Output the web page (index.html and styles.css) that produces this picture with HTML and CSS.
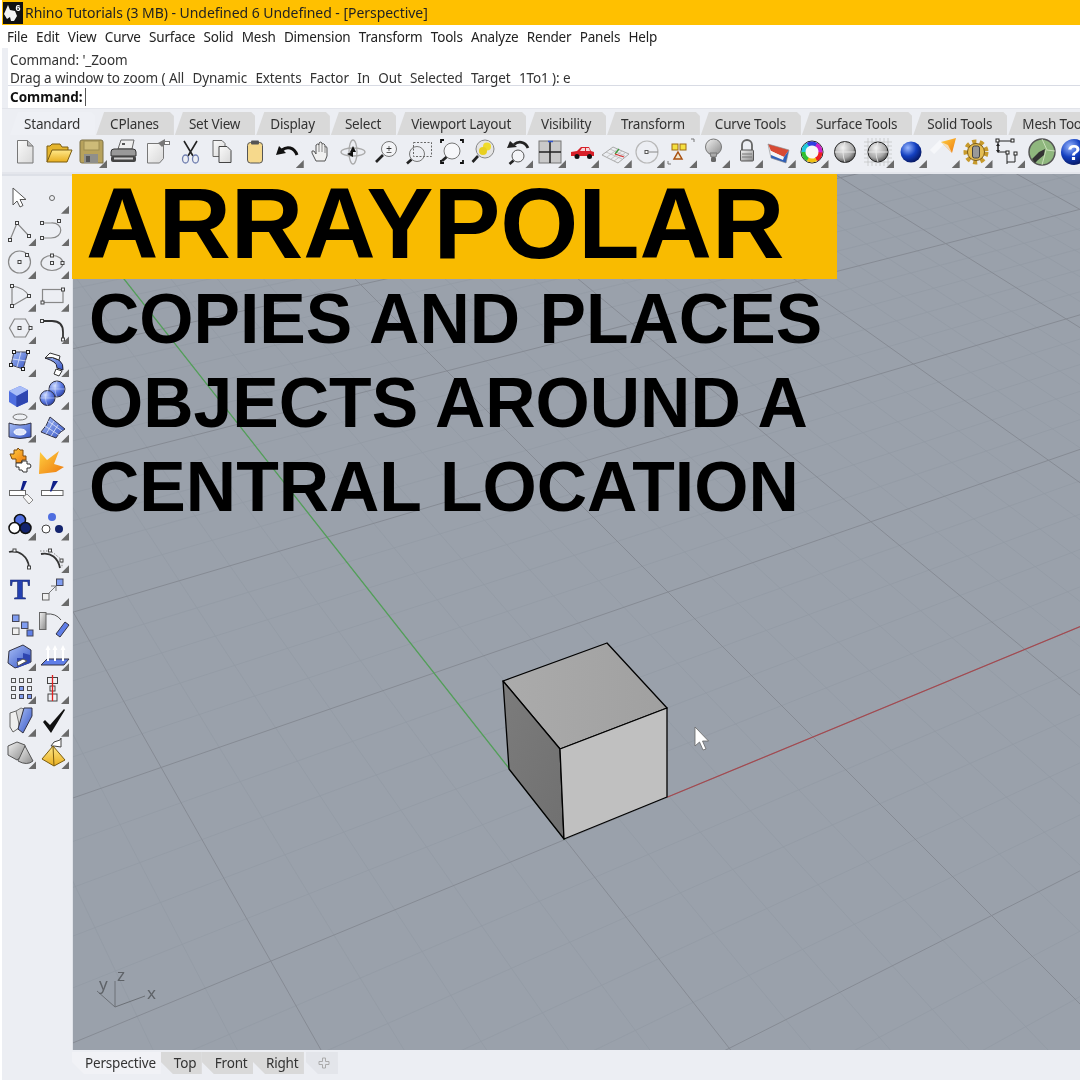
FILE: index.html
```html
<!DOCTYPE html>
<html lang="en">
<head>
<meta charset="utf-8">
<title>Rhino Tutorials</title>
<link rel="stylesheet" href="styles.css">
</head>
<body>
<svg class="defs" width="0" height="0" aria-hidden="true">
<defs>
<linearGradient id="gPage" x1="0" y1="0" x2="1" y2="1"><stop offset="0" stop-color="#fafafa"/><stop offset="1" stop-color="#d8d8d8"/></linearGradient>
<linearGradient id="gY" x1="0" y1="0" x2="0" y2="1"><stop offset="0" stop-color="#ffe88a"/><stop offset="1" stop-color="#e8ae1e"/></linearGradient>
<linearGradient id="gB" x1="0" y1="0" x2="1" y2="1"><stop offset="0" stop-color="#a9c0f7"/><stop offset="1" stop-color="#3553c4"/></linearGradient>
<linearGradient id="gO" x1="0" y1="0" x2="1" y2="1"><stop offset="0" stop-color="#ffd040"/><stop offset="1" stop-color="#ee7a10"/></linearGradient>
<linearGradient id="gGr" x1="0" y1="0" x2="1" y2="1"><stop offset="0" stop-color="#f2f2f2"/><stop offset="1" stop-color="#8a8a8a"/></linearGradient>
<linearGradient id="gTop" x1="0" y1="0" x2="1" y2="0"><stop offset="0" stop-color="#ababab"/><stop offset="1" stop-color="#a0a0a0"/></linearGradient>
<linearGradient id="gLeft" x1="0" y1="0" x2="1" y2="1"><stop offset="0" stop-color="#7c7c7c"/><stop offset="1" stop-color="#707070"/></linearGradient>
<radialGradient id="rB" cx=".35" cy=".3" r=".8"><stop offset="0" stop-color="#cfdcff"/><stop offset=".55" stop-color="#5a78e0"/><stop offset="1" stop-color="#27399a"/></radialGradient>
<radialGradient id="rD" cx=".35" cy=".3" r=".8"><stop offset="0" stop-color="#9ab8ff"/><stop offset=".5" stop-color="#1440c0"/><stop offset="1" stop-color="#041050"/></radialGradient>
<radialGradient id="rG" cx=".4" cy=".3" r=".8"><stop offset="0" stop-color="#f4f4f4"/><stop offset=".6" stop-color="#a8a8a8"/><stop offset="1" stop-color="#333"/></radialGradient>
</defs>
</svg>
<div class="app">
<header class="titlebar">
<svg class="logo" viewBox="0 0 20 22"><rect width="20" height="22" fill="#111"/><path d="M1 12l4-9 2 5 5 1 2 5-3 5H8l-1-4-3 2z" fill="#f2f2f2"/><text x="12.500" y="9" class="logo-six">6</text></svg>
<span>Rhino Tutorials (3 MB) - Undefined 6 Undefined - [Perspective]</span>
</header>
<nav class="menubar"><span>File</span><span>Edit</span><span>View</span><span>Curve</span><span>Surface</span><span>Solid</span><span>Mesh</span><span>Dimension</span><span>Transform</span><span>Tools</span><span>Analyze</span><span>Render</span><span>Panels</span><span>Help</span></nav>
<section class="cmd">
<div class="cmd-hist"><p>Command: '_Zoom</p><p>Drag a window to zoom ( <span class="opts">All&nbsp; Dynamic&nbsp; Extents&nbsp; Factor&nbsp; In&nbsp; Out&nbsp; Selected&nbsp; Target&nbsp; 1To1</span> ): e</p></div>
<div class="cmd-line"><b>Command:</b><i class="caret"></i></div>
</section>
<div class="tabs"><span class="tab on">Standard</span><span class="tab">CPlanes</span><span class="tab">Set View</span><span class="tab">Display</span><span class="tab">Select</span><span class="tab">Viewport Layout</span><span class="tab">Visibility</span><span class="tab">Transform</span><span class="tab">Curve Tools</span><span class="tab">Surface Tools</span><span class="tab">Solid Tools</span><span class="tab">Mesh Tools</span></div>
<div class="toolbar">
<span class="tool"><svg class="ic" viewBox="0 0 32 32"><path d="M8.5 4.5h10l5.500 5.500v17h-15.500z" fill="url(#gPage)" stroke="#777"/><path d="M18.500 4.500v5.500h5.500" fill="#bbb" stroke="#777"/></svg></span>
<span class="tool"><svg class="ic" viewBox="0 0 32 32"><path d="M5 26V10h3l2-2h8l2 3h6v3" fill="#e5b52e" stroke="#7a5c10"/><path d="M5 26l5-12h20l-5 12z" fill="url(#gY)" stroke="#7a5c10"/></svg></span>
<span class="tool more"><svg class="ic" viewBox="0 0 32 32"><path d="M5 6q0-2 2-2h19q2 0 2 2v21H7q-2 0-2-2z" fill="#b7a25c" stroke="#7c7046"/><rect x="9" y="5" width="15" height="9" fill="#cdbb78" stroke="#9c8c52"/><rect x="9" y="18" width="14" height="9" fill="#8f8f8a"/><rect x="11" y="20" width="4" height="6" fill="#555"/></svg></span>
<span class="tool"><svg class="ic" viewBox="0 0 32 32"><path d="M11 13l3-9h13l-2 9z" fill="#eee" stroke="#666"/><rect x="15" y="7" width="3" height="2" fill="#555"/><path d="M4 16q0-3 3-3h19q3 0 3 3v4H4z" fill="#999" stroke="#333"/><rect x="4" y="20" width="25" height="6" rx="2" fill="#444"/><rect x="7" y="21.500" width="19" height="2" fill="#ccc"/></svg></span>
<span class="tool"><svg class="ic" viewBox="0 0 32 32"><path d="M7.500 7.500h16v15l-4 4.500h-12z" fill="url(#gPage)" stroke="#777"/><path d="M18 7l7-4v2h5v4h-6l-2 2z" fill="#777"/><path d="M25 6h4v2h-4z" fill="#fff"/></svg></span>
<span class="tool"><svg class="ic" viewBox="0 0 32 32"><path d="M11 5l9 15M24 5l-9 15" stroke="#222" stroke-width="1.600" fill="none"/><ellipse cx="12.500" cy="23" rx="3" ry="4" fill="none" stroke="#7280b0" stroke-width="1.300"/><ellipse cx="22.500" cy="23" rx="3" ry="4" fill="none" stroke="#7280b0" stroke-width="1.300"/></svg></span>
<span class="tool"><svg class="ic" viewBox="0 0 32 32"><path d="M7 4.500h9l3 3v13H7z" fill="url(#gPage)" stroke="#666"/><path d="M13 10.500h8l4 4v12H13z" fill="url(#gPage)" stroke="#444"/></svg></span>
<span class="tool"><svg class="ic" viewBox="0 0 32 32"><rect x="8.500" y="6.500" width="15" height="20.500" rx="3" fill="#f6d98c" stroke="#555"/><rect x="12" y="4.500" width="8" height="4" rx="1" fill="#555"/></svg></span>
<span class="tool more"><svg class="ic" viewBox="0 0 32 32"><path d="M26 19C23 11 16 10 11 14" stroke="#111" stroke-width="3" fill="none"/><path d="M5 19l3-9 7 7z" fill="#111"/></svg></span>
<span class="tool"><svg class="ic" viewBox="0 0 32 32"><path d="M12 25l-4-8q-1-3 2-2l2 3V9q2-2 3 0V7q2-2 3 0v1q2-1 3 1v2q2-1 2 1v8l-2 5z" fill="#f0f0f0" stroke="#555"/><path d="M15 9v7M18 8v8M21 10v7" stroke="#888" fill="none"/></svg></span>
<span class="tool"><svg class="ic" viewBox="0 0 32 32"><ellipse cx="16" cy="16" rx="12" ry="4" fill="none" stroke="#aaa" stroke-width="1.300"/><ellipse cx="16" cy="16" rx="4" ry="12" fill="none" stroke="#aaa" stroke-width="1.300"/><path d="M16 10l3 6h-6z" fill="#111"/><path d="M10 18l6-3v6z" fill="#111"/></svg></span>
<span class="tool"><svg class="ic" viewBox="0 0 32 32"><circle cx="19" cy="13" r="7.500" fill="#f3f4f7" stroke="#777"/><path d="M13 19l-7 7" stroke="#222" stroke-width="2.600"/><text x="19" y="17" class="ic-txt">±</text></svg></span>
<span class="tool"><svg class="ic" viewBox="0 0 32 32"><rect x="10.500" y="6.500" width="18" height="14" fill="none" stroke="#666" stroke-dasharray="2 1.500"/><circle cx="14" cy="18" r="7.500" fill="none" stroke="#777"/><path d="M8.500 23.500l-4.500 4" stroke="#222" stroke-width="2.600"/></svg></span>
<span class="tool"><svg class="ic" viewBox="0 0 32 32"><circle cx="17" cy="15" r="8" fill="#f6f7fa" stroke="#777"/><path d="M11.500 21l-4.500 4" stroke="#222" stroke-width="2.600"/><path d="M6 7V4h3M25 4h3v3M28 24v3h-3M9 27H6v-3" stroke="#111" stroke-width="1.800" fill="none"/></svg></span>
<span class="tool"><svg class="ic" viewBox="0 0 32 32"><circle cx="17" cy="13" r="9" fill="#e4e4e4" stroke="#888"/><circle cx="19" cy="10.500" r="4" fill="#f0dc2c"/><circle cx="15" cy="15" r="4" fill="#e8cf20"/><path d="M10 20l-5.500 6" stroke="#222" stroke-width="2.600"/></svg></span>
<span class="tool more"><svg class="ic" viewBox="0 0 32 32"><circle cx="17" cy="20" r="6" fill="#f3f4f7" stroke="#555"/><path d="M12.500 24.500l-4 3.500" stroke="#222" stroke-width="2.600"/><path d="M27 12C24 5 17 5 13 8.500" stroke="#222" stroke-width="2.800" fill="none"/><path d="M6 12l3-7 7 6z" fill="#222"/></svg></span>
<span class="tool more"><svg class="ic" viewBox="0 0 32 32"><rect x="5" y="5" width="22" height="22" fill="#c9c9c9" stroke="#777"/><path d="M16 5v22M5 16h22" stroke="#222" stroke-width="1.500"/><path d="M14 5.500h5" stroke="#3355cc" stroke-width="1.500"/></svg></span>
<span class="tool more"><svg class="ic" viewBox="0 0 32 32"><path d="M4 20v-4l6-1 4-4h8l2 4 3 1v4z" fill="#d8202a"/><path d="M15 12h3v3h-5zM19 12h3l1 3h-4z" fill="#f4d8d8"/><circle cx="10" cy="20.500" r="2.500" fill="#111"/><circle cx="22.500" cy="20.500" r="2.500" fill="#111"/></svg></span>
<span class="tool more"><svg class="ic" viewBox="0 0 32 32"><path d="M3 19l11-8 16 7-11 9z" fill="#eceef2" stroke="#aaa"/><path d="M7 16l16 7M11 13l15 7M8 21l11-8M12 23l11-8M15 25l11-8" stroke="#b5b5b5" stroke-width=".7"/><path d="M16 18l4-5" stroke="#3a9a3a" stroke-width="1.300"/><path d="M16 18l9 3" stroke="#d83030" stroke-width="1.300"/></svg></span>
<span class="tool more"><svg class="ic" viewBox="0 0 32 32"><circle cx="15" cy="16" r="11" fill="none" stroke="#b8b8b8" stroke-width="1.200"/><rect x="13" y="14.500" width="3" height="3" fill="#fff" stroke="#555"/><path d="M16 16h10" stroke="#888"/></svg></span>
<span class="tool more"><svg class="ic" viewBox="0 0 32 32"><path d="M26 3h3v3M3 25v3h3" stroke="#777" fill="none"/><rect x="7" y="8" width="6" height="6" fill="#f4e040" stroke="#a06a10"/><rect x="15" y="8" width="6" height="6" fill="#f4e040" stroke="#a06a10"/><path d="M13 16l4 7H9z" fill="#f0e8d0" stroke="#a85010" stroke-width="1.500"/></svg></span>
<span class="tool more"><svg class="ic" viewBox="0 0 32 32"><circle cx="15.500" cy="11" r="8" fill="url(#gGr)" stroke="#777"/><path d="M12 17l1 4h5l1-4z" fill="#aaa" stroke="#777"/><rect x="13" y="21" width="5" height="5" rx="1.500" fill="#666"/></svg></span>
<span class="tool more"><svg class="ic" viewBox="0 0 32 32"><path d="M11 14V9a5 5 0 0 1 10 0v5" fill="none" stroke="#666" stroke-width="1.800"/><rect x="9.500" y="14" width="13" height="11" rx="1" fill="url(#gGr)" stroke="#555"/><path d="M11 18h10M11 21h10" stroke="#777"/></svg></span>
<span class="tool more"><svg class="ic" viewBox="0 0 32 32"><path d="M5 8l21 6-5 7L8 15z" fill="#d84a34"/><path d="M8 15l13 6-1 3-12-5z" fill="#f5f5f5"/><path d="M8 19l12 5 1-3 5-7-3 13-15-5z" fill="#3060b8"/><path d="M5 8l21 6-3 13-15-5z" fill="none" stroke="#888" stroke-width=".6"/></svg></span>
<span class="tool more"><svg class="ic" viewBox="0 0 32 32"><circle cx="16" cy="16" r="11" fill="#f8f8f8" stroke="#222"/><g fill="none" stroke-width="4"><circle cx="16" cy="16" r="8.500" stroke="#ee2020" pathLength="6" stroke-dasharray="1.050 4.950"/><circle cx="16" cy="16" r="8.500" stroke="#f0c010" pathLength="6" stroke-dasharray="1.050 4.950" stroke-dashoffset="-1"/><circle cx="16" cy="16" r="8.500" stroke="#30c030" pathLength="6" stroke-dasharray="1.050 4.950" stroke-dashoffset="-2"/><circle cx="16" cy="16" r="8.500" stroke="#20c8d8" pathLength="6" stroke-dasharray="1.050 4.950" stroke-dashoffset="-3"/><circle cx="16" cy="16" r="8.500" stroke="#3040e0" pathLength="6" stroke-dasharray="1.050 4.950" stroke-dashoffset="-4"/><circle cx="16" cy="16" r="8.500" stroke="#d020c8" pathLength="6" stroke-dasharray="1.050 4.950" stroke-dashoffset="-5"/></g></svg></span>
<span class="tool"><svg class="ic" viewBox="0 0 32 32"><circle cx="16" cy="16" r="10.500" fill="url(#rG)" stroke="#222"/><path d="M5.500 16h21M16 5.500q-4 10 0 21" stroke="#eee" stroke-width=".8" fill="none"/></svg></span>
<span class="tool more"><svg class="ic" viewBox="0 0 32 32"><g stroke="#bbb" stroke-width=".6"><path d="M2 6h28M2 10h28M2 14h28M2 18h28M2 22h28M2 26h28M6 2v28M10 2v28M14 2v28M18 2v28M22 2v28M26 2v28"/></g><circle cx="16" cy="16" r="10" fill="url(#rG)" stroke="#222"/><path d="M6 16h20M16 6q-4 10 0 20" stroke="#eee" stroke-width=".8" fill="none"/></svg></span>
<span class="tool more"><svg class="ic" viewBox="0 0 32 32"><circle cx="16" cy="16" r="10.500" fill="url(#rD)"/></svg></span>
<span class="tool more"><svg class="ic" viewBox="0 0 32 32"><path d="M5 16l10-10" stroke="#f6f7fa" stroke-width="6"/><path d="M14 6L29 2l-4 15z" fill="url(#gO)"/><path d="M14 6l11 11-4-8z" fill="#f4f4f4" opacity=".7"/></svg></span>
<span class="tool more"><svg class="ic" viewBox="0 0 32 32"><circle cx="16" cy="16" r="10" fill="none" stroke="#c79a2c" stroke-width="5" stroke-dasharray="4 3.200"/><circle cx="16" cy="16" r="8.500" fill="#e4bd52" stroke="#7a5a18"/><rect x="12.500" y="10" width="7" height="12" rx="2" fill="#999" stroke="#444"/></svg></span>
<span class="tool more"><svg class="ic" viewBox="0 0 32 32"><path d="M5 5h14M5 5v11h9v12M5 10v4M22 17v9M14 26h8" stroke="#222" fill="none"/><g fill="#fff" stroke="#222"><rect x="3" y="3" width="3" height="3"/><rect x="18" y="3" width="3" height="3"/><rect x="13" y="15" width="3" height="3"/><rect x="21" y="16" width="3" height="3"/></g><path d="M3 10h4l-2-3zM3 14h4l-2 3z" fill="#222"/></svg></span>
<span class="tool"><svg class="ic" viewBox="0 0 32 32"><circle cx="16" cy="16" r="13" fill="#8fb77e" stroke="#555" stroke-width="1.500"/><path d="M6 23l7-7 6-3-1 6-6 5-3 3z" fill="#333"/><path d="M16 3l5 11 8 1M20 14l-4 15" stroke="#d8e8c8" stroke-width=".8" fill="none"/></svg></span>
<span class="tool"><svg class="ic" viewBox="0 0 32 32"><circle cx="16" cy="16" r="13" fill="url(#rD)"/><text x="16" y="24" class="ic-help">?</text></svg></span>
</div>
<main class="work">
<aside class="side">
<span class="tool"><svg class="ic" viewBox="0 0 32 32"><path d="M9 7v17l4-4 3 6 3-1.500-3-6h6z" fill="#fff" stroke="#555"/></svg></span>
<span class="tool more"><svg class="ic" viewBox="0 0 32 32"><circle cx="15" cy="17" r="2.500" fill="#eef0f4" stroke="#666"/></svg></span>
<span class="tool more"><svg class="ic" viewBox="0 0 32 32"><path d="M6 26l7-17 12 13" class="ln"/><rect x="4.500" y="24.500" width="3" height="3" class="pt"/><rect x="11.500" y="7.500" width="3" height="3" class="pt"/><rect x="23.500" y="20.500" width="3" height="3" class="pt"/></svg></span>
<span class="tool more"><svg class="ic" viewBox="0 0 32 32"><path d="M5 9h9c13-1 13 15 0 15H5" class="ln"/><rect x="3.500" y="7.500" width="3" height="3" class="pt"/><rect x="20.500" y="5.500" width="3" height="3" class="pt"/><rect x="3.500" y="22.500" width="3" height="3" class="pt"/></svg></span>
<span class="tool more"><svg class="ic" viewBox="0 0 32 32"><circle cx="15.500" cy="16" r="11" class="ln"/><rect x="14" y="14.500" width="3" height="3" class="pt"/><rect x="21.500" y="7.500" width="3" height="3" class="pt"/></svg></span>
<span class="tool more"><svg class="ic" viewBox="0 0 32 32"><ellipse cx="15" cy="17" rx="11" ry="7.500" class="ln"/><rect x="13.500" y="15.500" width="3" height="3" class="pt"/><rect x="13.500" y="8" width="3" height="3" class="pt"/><rect x="24" y="15.500" width="3" height="3" class="pt"/></svg></span>
<span class="tool more"><svg class="ic" viewBox="0 0 32 32"><path d="M8 7C16 8 22 12 25 17L8 27z" class="ln"/><rect x="6.500" y="5.500" width="3" height="3" class="pt"/><rect x="23.500" y="15.500" width="3" height="3" class="pt"/><rect x="6.500" y="25.500" width="3" height="3" class="pt"/></svg></span>
<span class="tool more"><svg class="ic" viewBox="0 0 32 32"><rect x="5.500" y="10.500" width="20.500" height="13" class="ln"/><rect x="4" y="22" width="3" height="3" class="pt"/><rect x="24.500" y="9" width="3" height="3" class="pt"/></svg></span>
<span class="tool more"><svg class="ic" viewBox="0 0 32 32"><path d="M5.500 16l5-9h11l5 9-5 9h-11z" class="ln"/><rect x="14" y="14.500" width="3" height="3" class="pt"/><rect x="25" y="14.500" width="3" height="3" class="pt"/></svg></span>
<span class="tool more"><svg class="ic" viewBox="0 0 32 32"><path d="M5 9h10q11 0 11 11v8" fill="none" stroke="#333" stroke-width="1.800"/><rect x="3.500" y="7.500" width="3" height="3" class="pt"/><rect x="24.500" y="26" width="3" height="3" class="pt"/></svg></span>
<span class="tool more"><svg class="ic" viewBox="0 0 32 32"><path d="M10 8h14l-5 17-12-4z" fill="url(#gB)" stroke="#445"/><path d="M17 8l-4 15M8.500 15l14 2" stroke="#dfe6fa" stroke-width=".8"/><g fill="#fff" stroke="#222"><rect x="8.500" y="6.500" width="3" height="3"/><rect x="22.500" y="6.500" width="3" height="3"/><rect x="17.500" y="23.500" width="3" height="3"/><rect x="5.500" y="19.500" width="3" height="3"/></g></svg></span>
<span class="tool more"><svg class="ic" viewBox="0 0 32 32"><path d="M8 14q8-2 14 2 5 4 4 10l-6-2q0-4-3-6-3-2-9-4z" fill="url(#gB)" stroke="#223"/><path d="M8 14l5-5 10 3-1 4q-6-4-14-2z" fill="#fff" stroke="#333"/><path d="M19 25l6 2-3 5-5-2z" fill="#fff" stroke="#333"/></svg></span>
<span class="tool more"><svg class="ic" viewBox="0 0 32 32"><path d="M5 14l11-5 8 4v12l-11 5-8-5z" fill="#4f6ee0"/><path d="M5 14l8 5 11-6-8-4z" fill="#a9bdf8"/><path d="M13 19v11" stroke="#2a3f9a"/><path d="M13 19l11-6v12l-11 5z" fill="#2f46b0"/></svg></span>
<span class="tool more"><svg class="ic" viewBox="0 0 32 32"><circle cx="20" cy="12" r="8" fill="url(#rB)" stroke="#334"/><path d="M12 12h16M20 4q-4 8 0 16" stroke="#dfe6fa" stroke-width=".5" fill="none"/><circle cx="10.500" cy="21" r="7.500" fill="url(#rB)" stroke="#334"/><path d="M3 21h15M10.500 13.500q-4 7.500 0 15" stroke="#dfe6fa" stroke-width=".5" fill="none"/></svg></span>
<span class="tool more"><svg class="ic" viewBox="0 0 32 32"><ellipse cx="16" cy="7" rx="7" ry="3" fill="#eef0f4" stroke="#777"/><path d="M5 13q11 4 22 0v14q-11 3-22 0z" fill="url(#gB)" stroke="#334"/><ellipse cx="16" cy="22" rx="6" ry="3" fill="#dfe6fa" stroke="#fff"/></svg></span>
<span class="tool more"><svg class="ic" viewBox="0 0 32 32"><path d="M4 22q6-6 9-15l15 12q-6 3-9 9z" fill="url(#gB)" stroke="#334"/><path d="M8 16l14 9M11 11l14 10M9 24l8-13M14 26l7-11" stroke="#dfe6fa" stroke-width=".8"/></svg></span>
<span class="tool"><svg class="ic" viewBox="0 0 32 32"><path d="M6 11h4V7h3l1-2 2 2h3v6h3v4h-4l-1 3h-5v-4H8z" fill="url(#gO)" stroke="#7a4a10"/><path d="M15 20h3v-2h5v3h3l1 2-1 2h-3v4h-4l-1-2h-3v-3h-3v-4z" fill="#fff" stroke="#333"/></svg></span>
<span class="tool"><svg class="ic" viewBox="0 0 32 32"><path d="M2 31l1-22 7 8 12-9-5 13 10 3-8 5z" fill="url(#gO)"/></svg></span>
<span class="tool"><svg class="ic" viewBox="0 0 32 32"><path d="M17 20L23 6h-4l-3 11z" fill="#10208a"/><rect x="5.500" y="15.500" width="16" height="5" fill="#fff" stroke="#666"/><path d="M19 22l4-3 6 6-4 4z" fill="#f6f6f6" stroke="#888"/></svg></span>
<span class="tool"><svg class="ic" viewBox="0 0 32 32"><rect x="4.500" y="15.500" width="21.500" height="5" fill="#fff" stroke="#666"/><path d="M14 17l7-11h-5l-3 10z" fill="#10208a"/></svg></span>
<span class="tool more"><svg class="ic" viewBox="0 0 32 32"><circle cx="16" cy="12" r="5.500" fill="#4f6ee0" stroke="#111" stroke-width="1.500"/><circle cx="10.500" cy="20" r="5.500" fill="#fff" stroke="#111" stroke-width="1.500"/><circle cx="21.500" cy="20" r="5.500" fill="#14246e" stroke="#111" stroke-width="1.500"/></svg></span>
<span class="tool more"><svg class="ic" viewBox="0 0 32 32"><circle cx="15" cy="9" r="4" fill="#4f6ee0"/><circle cx="9" cy="21" r="4" fill="#fff" stroke="#444"/><circle cx="22" cy="21" r="4" fill="#14246e"/></svg></span>
<span class="tool"><svg class="ic" viewBox="0 0 32 32"><path d="M5 11C15 8 24 16 25 26" fill="none" stroke="#333" stroke-width="1.800"/><rect x="9" y="8" width="3" height="3" class="pt"/><rect x="23.500" y="25" width="3" height="3" class="pt"/></svg></span>
<span class="tool more"><svg class="ic" viewBox="0 0 32 32"><path d="M3 10h11l11 9v8" fill="none" stroke="#888" stroke-dasharray="1.500 1.500"/><path d="M4 13C14 11 21 17 23 27" fill="none" stroke="#333" stroke-width="1.800"/><rect x="11.500" y="8" width="3" height="3" class="pt"/><rect x="23" y="18" width="3" height="3" class="pt"/></svg></span>
<span class="tool"><svg class="ic" viewBox="0 0 32 32"><text x="16" y="26" class="ic-t">T</text></svg></span>
<span class="tool more"><svg class="ic" viewBox="0 0 32 32"><rect x="5.500" y="20.500" width="6.500" height="6.500" fill="#f0f0f0" stroke="#666"/><rect x="19.500" y="6" width="6.500" height="6.500" fill="#7f9cf0" stroke="#445"/><path d="M12 20l7-7M14 13h5v5" stroke="#777" fill="none"/></svg></span>
<span class="tool"><svg class="ic" viewBox="0 0 32 32"><rect x="8.500" y="9" width="6.500" height="6.500" fill="#7f9cf0" stroke="#445"/><rect x="17.500" y="16" width="6.500" height="6.500" fill="#7f9cf0" stroke="#445"/><rect x="8.500" y="22" width="6.500" height="6.500" fill="#f0f0f0" stroke="#666"/><rect x="23" y="24" width="6" height="6" fill="#6080e8" stroke="#445"/></svg></span>
<span class="tool"><svg class="ic" viewBox="0 0 32 32"><rect x="2.500" y="6.500" width="6.500" height="17" fill="url(#gGr)" stroke="#666"/><path d="M19 28l9-12 4 3-9 12z" fill="#5f7ee8" stroke="#334"/><path d="M9 8q10-1 15 6" fill="none" stroke="#555"/></svg></span>
<span class="tool more"><svg class="ic" viewBox="0 0 32 32"><path d="M5 12l14-6 8 5v12l-16 6-7-5z" fill="url(#gB)" stroke="#334"/><path d="M13 23v-4h6v-5l7 2v8l-13 5z" fill="#2f46b0"/><path d="M13 23l6-3 4 2-9 5z" fill="#fff" stroke="#555"/></svg></span>
<span class="tool more"><svg class="ic" viewBox="0 0 32 32"><path d="M4 26l6-6h22l-5 6z" fill="#5f7ee8" stroke="#334"/><path d="M11 22V9M18 22V9M26 22V9" stroke="#fff" stroke-width="2"/><path d="M8.500 11L11 6l2.500 5zM15.500 11L18 6l2.500 5zM23.500 11L26 6l2.500 5z" fill="#fff"/></svg></span>
<span class="tool more"><svg class="ic" viewBox="0 0 32 32"><g fill="#eef0f4" stroke="#555"><rect x="7.500" y="7.500" width="4" height="4"/><rect x="15.500" y="7.500" width="4" height="4"/><rect x="23.500" y="7.500" width="4" height="4"/><rect x="7.500" y="15.500" width="4" height="4"/><rect x="23.500" y="15.500" width="4" height="4"/><rect x="7.500" y="23.500" width="4" height="4"/></g><g fill="#7f9cf0" stroke="#445"><rect x="15.500" y="15.500" width="4" height="4"/><rect x="15.500" y="23.500" width="4" height="4"/><rect x="23.500" y="23.500" width="4" height="4"/></g></svg></span>
<span class="tool more"><svg class="ic" viewBox="0 0 32 32"><g fill="#eef0f4" stroke="#444"><rect x="10.500" y="6.500" width="10" height="6"/><rect x="13" y="15" width="5" height="5"/><rect x="11" y="23" width="9" height="7"/></g><path d="M15.500 4v26" stroke="#e02020" stroke-width="1.300"/></svg></span>
<span class="tool more"><svg class="ic" viewBox="0 0 32 32"><path d="M6 9l9-3v18l-6 4-3-5z" fill="#efefef" stroke="#666"/><path d="M12 7l5-3 3 1-4 19z" fill="#d8d8d8" stroke="#777"/><path d="M20 4h8v8l-9 17-5-4z" fill="url(#gB)" stroke="#334"/></svg></span>
<span class="tool more"><svg class="ic" viewBox="0 0 32 32"><path d="M6 18l2-2 5 5L27 5l1 1-14 23z" fill="#111"/></svg></span>
<span class="tool more"><svg class="ic" viewBox="0 0 32 32"><path d="M4 9l9-4 8 3v9l-8 6-9-5z" fill="url(#gGr)" stroke="#555"/><path d="M21 9l8 15q-6 5-15 0z" fill="url(#gGr)" stroke="#555"/></svg></span>
<span class="tool more"><svg class="ic" viewBox="0 0 32 32"><path d="M17 5l6-2 1-2v9l-7-1h-3z" fill="#fff" stroke="#444"/><path d="M16 9l12 14-11 6L5 22z" fill="url(#gY)" stroke="#7a5c10"/><path d="M16 9l1 20" stroke="#7a5c10"/></svg></span>
</aside>
<div class="view">
<svg id="scene" class="scene" viewBox="72 174 1008 876" aria-hidden="true">
<g id="grid"></g>
<rect x="72" y="174" width="1" height="876" fill="#dfe2e8"/>
<g class="gizmo"><path d="M115 1007L115 981M115 1007L145 996M115 1007L97 991"/><text x="99" y="990">y</text><text x="117" y="981">z</text><text x="147" y="999">x</text></g>
<g id="cube" stroke="#000" stroke-width="1.300" stroke-linejoin="round">
<polygon points="503,681 607,643 667,708 560,749" fill="url(#gTop)"/>
<polygon points="503,681 560,749 564,839 509,769" fill="url(#gLeft)"/>
<polygon points="560,749 667,708 667,797 564,839" fill="#c0c0c0"/>
</g>
<path d="M695 727V746L699.500 742L703 750L706 749L702.500 741L708.500 741Z" fill="#fff" stroke="#666" stroke-width=".8"/>
</svg>
<div class="hero">
<h1>ARRAYPOLAR</h1>
<p>COPIES AND PLACES</p>
<p>OBJECTS AROUND A</p>
<p>CENTRAL LOCATION</p>
</div>
</div>
</main>
<footer class="vtabs"><span class="vt on">Perspective</span><span class="vt">Top</span><span class="vt">Front</span><span class="vt">Right</span><span class="vt add"><svg viewBox="0 0 12 12" width="12" height="12"><path d="M4.500 1h3v3.500H11v3H7.500V11h-3V7.500H1v-3h3.500z" fill="none" stroke="#aaa"/></svg></span></footer>
</div>
<script src="grid.js"></script>
</body>
</html>
```
FILE: styles.css
```css
* { box-sizing: border-box; }
html, body { margin: 0; padding: 0; width: 1080px; height: 1080px; overflow: hidden; background: #fff; }
body { font-family: "Noto Sans", "Open Sans", sans-serif; color: #333; }
.defs { position: absolute; }
.app { display: flex; flex-direction: column; width: 1078px; height: 1080px; margin-left: 2px; background: #eceef3; overflow: hidden; filter: blur(.4px); }

.titlebar { display: flex; align-items: center; gap: 2px; height: 25px; background: #ffc000; font-size: 14px; letter-spacing: -.05px; color: #222; padding-left: 1px; flex: none; }
.logo { width: 20px; height: 22px; flex: none; }
.logo-six { font: bold 9px "Liberation Sans", sans-serif; fill: #fff; }

.menubar { display: flex; gap: 8.300px; height: 23px; align-items: center; padding: 1px 0 0 5px; background: #fff; font-size: 13.500px; letter-spacing: -.2px; color: #222; flex: none; }

.cmd { margin-left: 6px; background: #fff; height: 60px; flex: none; font-size: 13.500px; letter-spacing: -.1px; color: #333; }
.cmd-hist { height: 38px; padding: 3px 0 0 2px; border-bottom: 1px solid #d8dbe4; }
.cmd-hist p { margin: 0; line-height: 18px; }
.opts { word-spacing: .75px; }
.cmd-line { display: flex; align-items: center; height: 21px; padding-left: 2px; color: #111; }
.cmd-line b { font-weight: 700; font-size: 13.500px; letter-spacing: 0; }
.caret { width: 1px; height: 18px; background: #555; margin-left: 2px; }

.tabs { display: flex; height: 27px; padding: 3px 0 0 8px; flex: none; font-size: 13.500px; letter-spacing: -.2px; color: #333; border-top: 1px solid #e2e4ea; white-space: nowrap; }
.tab { display: flex; align-items: center; padding: 0 15px 0 14px; height: 23px; margin-right: 1px; background: #d9d9d9; clip-path: polygon(0 100%, 8px 0, calc(100% - 4px) 0, 100% 4px, 100% 100%); flex: none; }
.tab.on { background: #eef0f5; }

.toolbar { display: flex; height: 39px; padding: 1px 0 0 6.600px; flex: none; overflow: hidden; border-bottom: 2px solid #e4e6ec; }
.tool { position: relative; display: block; flex: none; }
.toolbar .tool { width: 32.800px; height: 32px; }
.ic { display: block; width: 32px; height: 32px; overflow: visible; margin: 0 auto; }
.ln { fill: none; stroke: #888; stroke-width: 1.200px; }
.pt { fill: #f4f5f8; stroke: #444; stroke-width: 1px; }
.ic-txt { font: 10px "Liberation Sans", sans-serif; text-anchor: middle; fill: #333; }
.ic-help { font: bold 22px "Liberation Sans", sans-serif; text-anchor: middle; fill: #fff; }
.ic-t { font: bold 30px "Liberation Serif", serif; text-anchor: middle; fill: #2440b0; stroke: #10206a; stroke-width: .6px; }
.more::after { content: ""; position: absolute; right: 0; bottom: 0; width: 8px; height: 8px; background: #6a6a6a; clip-path: polygon(100% 0, 100% 100%, 0 100%); }

.work { display: flex; flex: 1; min-height: 0; }
.side { width: 70px; flex: none; display: grid; grid-template-columns: 33px 33px; grid-auto-rows: 32.700px; padding: 5px 0 0 1px; align-content: start; border-top: 2px solid #dde0e7; }
.side .tool { width: 33px; height: 32.700px; }

.view { position: relative; flex: 1; background: #9aa1ab; overflow: hidden; }
.scene { position: absolute; left: 0; top: 0; width: 1008px; height: 876px; display: block; }
.gizmo path { fill: none; stroke: #6c7076; stroke-width: 1px; }
.gizmo text { font: 17px "Noto Sans", sans-serif; fill: #5f6368; }
.hero { position: relative; font-family: "Liberation Sans", Arial, sans-serif; font-weight: 700; color: #000; }
.hero h1 { margin: 0; width: 765px; height: 105px; background: #f9bb00; font-size: 100.300px; line-height: 99px; padding-left: 14px; }
.hero p { margin: 0; font-size: 69.700px; line-height: 84px; padding-left: 17px; }
.hero h1 + p { margin-top: -2px; }

.vtabs { display: flex; height: 30px; flex: none; padding: 2px 0 0 70px; font-size: 13.500px; letter-spacing: -.2px; color: #333; }
.vt { display: flex; align-items: center; height: 22px; padding: 0 5.500px 0 13px; background: #d9d9d9; clip-path: polygon(0 0, 100% 0, 100% 100%, 12px 100%, 0 10px); }
.vt.on { background: #f1f2f6; padding-right: 5px; padding-left: 13px; }
.vt.add { background: #e3e5ea; margin-left: 2px; padding: 0 8px 0 12px; }
```
FILE: grid.js
```js
(function () {
  var q = [[565, 839.5], [813, 737], [668, 592], [434, 673]];
  var x0 = q[0][0], y0 = q[0][1], x1 = q[1][0], y1 = q[1][1], x2 = q[2][0], y2 = q[2][1], x3 = q[3][0], y3 = q[3][1];
  var dx1 = x1 - x2, dx2 = x3 - x2, sx = x0 - x1 + x2 - x3;
  var dy1 = y1 - y2, dy2 = y3 - y2, sy = y0 - y1 + y2 - y3;
  var det = dx1 * dy2 - dx2 * dy1;
  var g = (sx * dy2 - dx2 * sy) / det, h = (dx1 * sy - sx * dy1) / det;
  var a = x1 - x0 + g * x1, b = x3 - x0 + h * x3, d = y1 - y0 + g * y1, e = y3 - y0 + h * y3;
  function P(u, v) {
    var w = g * u + h * v + 1;
    return [(a * u + b * v + x0) / w, (d * u + e * v + y0) / w];
  }
  var NS = 'http://www.w3.org/2000/svg', root = document.getElementById('grid');
  function line(p, q, cls) {
    var l = document.createElementNS(NS, 'line');
    l.setAttribute('x1', p[0].toFixed(1)); l.setAttribute('y1', p[1].toFixed(1));
    l.setAttribute('x2', q[0].toFixed(1)); l.setAttribute('y2', q[1].toFixed(1));
    l.setAttribute('class', cls);
    root.appendChild(l);
  }
  var U0 = -5, U1 = 9, V0 = -3, V1 = 9, i;
  var layers = [1, 0];
  layers.forEach(function (minor) {
    for (i = U0 * 5; i <= U1 * 5; i++) {
      if ((i % 5 !== 0) == minor) line(P(i / 5, V0), P(i / 5, V1), minor ? 'g-min' : 'g-maj');
    }
    for (i = V0 * 5; i <= V1 * 5; i++) {
      if ((i % 5 !== 0) == minor) line(P(U0, i / 5), P(U1, i / 5), minor ? 'g-min' : 'g-maj');
    }
  });
  line([667, 797.3], P(10, 0), 'g-x');
  line(P(0, 0), P(0, 9), 'g-y');
  var st = document.createElementNS(NS, 'style');
  st.textContent = '.g-min{stroke:#939aa4;stroke-width:.8}.g-maj{stroke:#868b94;stroke-width:1}.g-x{stroke:#a5484e;stroke-width:1.2}.g-y{stroke:#52a058;stroke-width:1.3}';
  root.appendChild(st);
})();
```
